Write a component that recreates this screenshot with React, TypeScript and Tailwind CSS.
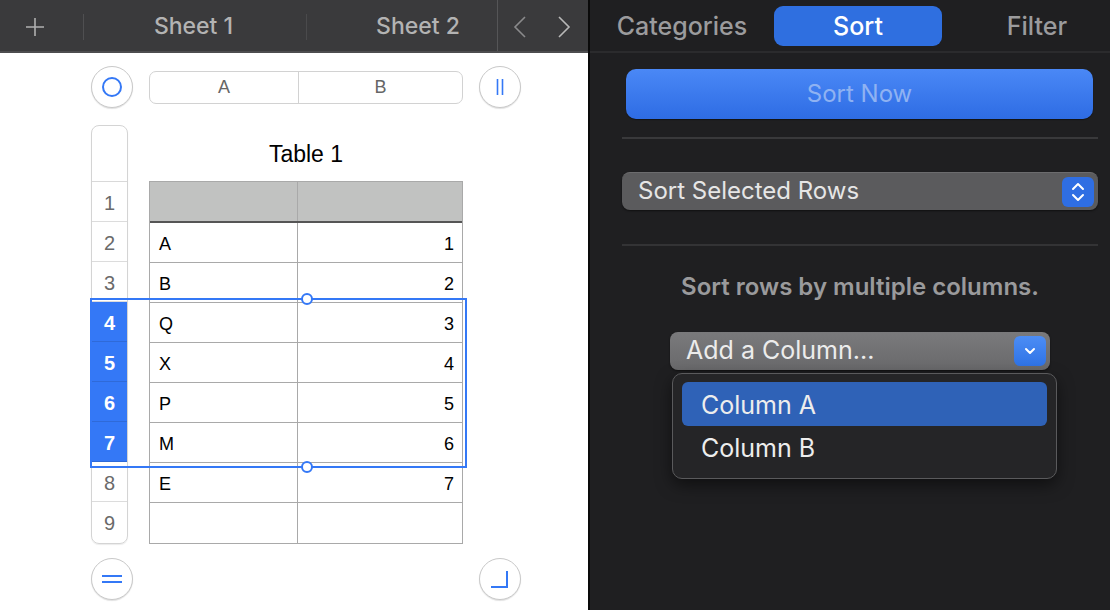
import React from "react";

const rows: { label: string; num: string }[] = [
  { label: "A", num: "1" },
  { label: "B", num: "2" },
  { label: "Q", num: "3" },
  { label: "X", num: "4" },
  { label: "P", num: "5" },
  { label: "M", num: "6" },
  { label: "E", num: "7" },
  { label: "", num: "" },
];

function CircleBtn({ children }: { children: React.ReactNode }) {
  return (
    <div className="w-[42px] h-[42px] rounded-full border border-[#c9c9c9] bg-white shadow-[0_1px_1px_rgba(0,0,0,0.12)] flex items-center justify-center shrink-0">
      {children}
    </div>
  );
}

function LeftPanel() {
  return (
    <div className="w-[588px] h-full flex flex-col bg-white">
      {/* top bar */}
      <div className="h-[53px] bg-[#3a3a3c] border-b-2 border-[#4d4d4f] flex items-center text-[#b3b3b3] text-[23px] font-medium shrink-0 pt-[2px]" style={{ fontFamily: "Inter, 'Liberation Sans', sans-serif" }}>
        <div className="w-[83px] flex items-center justify-center pr-[14px]">
          <svg width="20" height="20" viewBox="0 0 20 20"><path d="M10 1v18M1 10h18" stroke="#b0b0b0" strokeWidth="1.6" /></svg>
        </div>
        <div className="w-px h-[26px] bg-[#4f4f51]" />
        <div className="w-[222px] text-center pr-[3px]">Sheet 1</div>
        <div className="w-px h-[26px] bg-[#4a4a4c]" />
        <div className="w-[190px] text-center pl-[32px]">Sheet 2</div>
        <div className="w-px self-stretch bg-[#555557] -mt-[2px]" />
        <div className="flex-1 flex items-center justify-around pr-[2px]">
          <svg width="14" height="24" viewBox="0 0 14 24"><path d="M12 2 2 12l10 10" fill="none" stroke="#8a8a8c" strokeWidth="1.6" /></svg>
          <svg width="14" height="24" viewBox="0 0 14 24"><path d="M2 2l10 10L2 22" fill="none" stroke="#b8b8b8" strokeWidth="1.6" /></svg>
        </div>
      </div>

      {/* canvas */}
      <div className="flex-1 pl-[91px] pt-[13px] flex flex-col" style={{ fontFamily: "'Liberation Sans', Arial, sans-serif" }}>
        {/* column header row */}
        <div className="flex items-center h-[42px]">
          <CircleBtn>
            <div className="w-[20px] h-[20px] rounded-full border-2 border-[#3478f6]" />
          </CircleBtn>
          <div className="ml-[16px] w-[314px] h-[33px] rounded-[7px] border border-[#d2d2d2] flex text-[18px] text-[#666]">
            <div className="w-[149px] border-r border-[#d2d2d2] flex items-center justify-center">A</div>
            <div className="flex-1 flex items-center justify-center">B</div>
          </div>
          <div className="ml-[16px]">
            <CircleBtn>
              <svg width="10" height="18" viewBox="0 0 10 18"><path d="M2.5 1v16M7.5 1v16" stroke="#3478f6" strokeWidth="1.6" /></svg>
            </CircleBtn>
          </div>
        </div>

        {/* table section */}
        <div className="relative flex mt-[17px]">
          {/* row header column */}
          <div className="w-[37px] rounded-[8px] border border-[#d4d4d4] flex flex-col overflow-hidden shadow-[0_1px_1px_rgba(0,0,0,0.08)] text-[20px] text-[#6a6a6a]">
            <div className="h-[56px] border-b border-[#d9d9d9]" />
            {[1, 2, 3, 4, 5, 6, 7, 8, 9].map((n) => {
              const sel = n >= 4 && n <= 7;
              return (
                <div
                  key={n}
                  className={
                    sel
                      ? "h-[40px] flex items-center justify-center bg-[#3478f6] text-white font-bold border-b border-[#2f6ad8] pt-[2px]"
                      : n === 9
                      ? "h-[40px] flex items-center justify-center pt-[2px]"
                      : "h-[40px] flex items-center justify-center border-b border-[#dcdcdc] pt-[2px]"
                  }
                >
                  {n}
                </div>
              );
            })}
          </div>

          {/* table */}
          <div className="ml-[21px] w-[314px] flex flex-col">
            <div className="h-[56px] flex items-center justify-center text-[23px] text-black pt-[3px]">Table 1</div>
            <div className="border border-[#a9a9a9] flex flex-col">
              <div className="h-[41px] flex bg-[#c1c2c1] border-b-2 border-[#555]">
                <div className="w-[148px] border-r border-[#a9a9a9]" />
                <div className="flex-1" />
              </div>
              {rows.map((r, i) => (
                <div key={i} className={i === rows.length - 1 ? "h-[40px] flex text-[18px] text-black" : "h-[40px] flex text-[18px] text-black border-b border-[#a9a9a9]"}>
                  <div className="w-[148px] border-r border-[#a9a9a9] flex items-center pl-[9px] pt-[3px]">{r.label}</div>
                  <div className="flex-1 flex items-center justify-end pr-[8px] pt-[3px]">{r.num}</div>
                </div>
              ))}
            </div>
          </div>

          {/* selection overlay */}
          <div className="absolute left-[-1px] top-[173px] w-[377px] h-[170px] border-2 border-[#3478f6] pointer-events-none">
            <div className="absolute left-[209px] top-[-7px] w-[12px] h-[12px] rounded-full bg-white border-2 border-[#3478f6]" />
            <div className="absolute left-[209px] bottom-[-7px] w-[12px] h-[12px] rounded-full bg-white border-2 border-[#3478f6]" />
          </div>
        </div>

        {/* bottom buttons */}
        <div className="flex items-center mt-[14px] w-[430px] justify-between">
          <CircleBtn>
            <svg width="22" height="10" viewBox="0 0 22 10"><path d="M1 2h20M1 8h20" stroke="#3478f6" strokeWidth="2" /></svg>
          </CircleBtn>
          <CircleBtn>
            <svg width="20" height="20" viewBox="0 0 20 20"><path d="M17 2v16H1" fill="none" stroke="#3478f6" strokeWidth="2" /></svg>
          </CircleBtn>
        </div>
      </div>
    </div>
  );
}

function RightPanel() {
  return (
    <div className="flex-1 h-full bg-[#1f1f21] flex flex-col" style={{ fontFamily: "Inter, 'Liberation Sans', sans-serif" }}>
      {/* tabs */}
      <div className="h-[53px] border-b-2 border-[#2b2b2d] flex items-center text-[25px] font-medium shrink-0">
        <div className="w-[184px] text-center text-[#9b9b9d] pt-[3px]">Categories</div>
        <div className="w-[168px] h-[40px] rounded-[9px] bg-[#2f6fe0] text-white flex items-center justify-center pt-[3px]">Sort</div>
        <div className="flex-1 text-center text-[#9b9b9d] pl-[22px] pt-[3px]">Filter</div>
      </div>

      <div className="pl-[32px] pr-[12px] flex flex-col">
        <div className="mt-[16px] mx-[4px] mr-[5px] h-[50px] rounded-[10px] bg-gradient-to-b from-[#4a88f6] to-[#2e6ce4] flex items-center justify-center text-[24px] text-[#8fb2f2] shadow-[0_1px_1px_rgba(0,0,0,0.4)]">
          Sort Now
        </div>
        <div className="mt-[18px] h-[2px] bg-[#39393b]" />

        <div className="mt-[33px] h-[38px] rounded-[8px] bg-[#5b5b5d] border-t border-[#6c6c6e] shadow-[0_1px_2px_rgba(0,0,0,0.5)] flex items-center pl-[16px] pr-[4px] text-[24px] text-[#e6e6e6]">
          <span className="flex-1 -mt-[2px]">Sort Selected Rows</span>
          <div className="w-[32px] h-[30px] rounded-[6px] bg-[#2f6ee3] flex items-center justify-center">
            <svg width="16" height="22" viewBox="0 0 16 22"><path d="M3 8l5-5 5 5M3 14l5 5 5-5" fill="none" stroke="white" strokeWidth="2" strokeLinecap="round" strokeLinejoin="round" /></svg>
          </div>
        </div>

        <div className="mt-[34px] h-[2px] bg-[#333335]" />

        <div className="mt-[27px] text-center text-[24px] font-semibold text-[#9a9a9c] leading-[28px]">
          Sort rows by multiple columns.
        </div>

        <div className="relative mt-[31px] self-center w-[380px]">
          <div className="h-[38px] rounded-[8px] bg-gradient-to-b from-[#7a7a7c] to-[#69696b] shadow-[0_1px_2px_rgba(0,0,0,0.5)] flex items-center pl-[16px] pr-[4px] text-[25px] text-[#ececec]">
            <span className="flex-1 -mt-[1px]">Add a Column...</span>
            <div className="w-[32px] h-[30px] rounded-[6px] bg-gradient-to-b from-[#4c8df5] to-[#2f73e6] flex items-center justify-center">
              <svg width="14" height="10" viewBox="0 0 14 10"><path d="M3 3l4 4 4-4" fill="none" stroke="white" strokeWidth="2" strokeLinecap="round" strokeLinejoin="round" /></svg>
            </div>
          </div>
          {/* menu */}
          <div className="absolute left-[2px] top-[41px] w-[385px] h-[106px] rounded-[10px] bg-[#252527] border border-[#5a5a5c] shadow-[0_6px_16px_rgba(0,0,0,0.5)] p-[9px] pt-[8px] flex flex-col text-[25px] text-[#ededed]">
            <div className="h-[44px] rounded-[6px] bg-[#2f62b7] flex items-center pl-[19px] pt-[3px]">Column A</div>
            <div className="h-[44px] flex items-center pl-[19px] pt-[3px]">Column B</div>
          </div>
        </div>
      </div>
    </div>
  );
}

export default function App() {
  return (
    <div className="w-[1110px] h-[610px] flex overflow-hidden bg-black">
      <LeftPanel />
      <div className="w-[2px] h-full bg-[#0a0a0a]" />
      <RightPanel />
    </div>
  );
}
